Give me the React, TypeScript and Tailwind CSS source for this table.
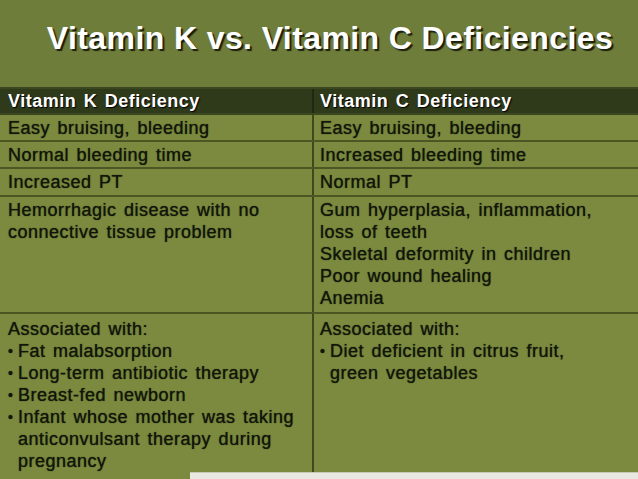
const font = { fontFamily: '"Liberation Sans", Arial, sans-serif' };

function Bullet({ children }: { children: React.ReactNode }) {
  return (
    <div className="flex">
      <span className="w-[10px] shrink-0 text-[14px]">•</span>
      <span>{children}</span>
    </div>
  );
}

function Row({ left, right, className }: { left: React.ReactNode; right: React.ReactNode; className: string }) {
  return (
    <div className={`grid grid-cols-[314px_1fr] border-b-2 border-[#4b5624] ${className}`}>
      <div className="border-r-2 border-[#3e4a1c] pl-[8px] pt-[2px]">{left}</div>
      <div className="pl-[6px] pt-[2px]">{right}</div>
    </div>
  );
}

export default function App() {
  return (
    <div className="w-[638px] h-[479px] overflow-hidden bg-[#6f7d3b] flex flex-col" style={font}>
      <div className="h-[87px] flex items-start justify-center pt-[14px] pl-[22px]">
        <h1 className="text-white font-bold text-[32px] tracking-[0.4px] [text-shadow:2px_2px_1px_#1b1f0e]">
          Vitamin K vs. Vitamin C Deficiencies
        </h1>
      </div>

      <div className="bg-[#7b8a3e] flex-1 flex flex-col text-[18px] leading-[22px] tracking-[0.5px] [word-spacing:2px] text-[#12150a] [text-shadow:0_0_1px_#1c2210]">
        <div className="grid grid-cols-[314px_1fr] h-[28px] bg-[#2e3a1a] border-y-2 border-[#3a4620] text-white font-bold [text-shadow:1px_1px_1px_#000]">
          <div className="border-r-2 border-[#1f2810] pl-[8px] pt-[1px]">Vitamin K Deficiency</div>
          <div className="pl-[6px] pt-[1px]">Vitamin C Deficiency</div>
        </div>
        <Row className="h-[27px]" left="Easy bruising, bleeding" right="Easy bruising, bleeding" />
        <Row className="h-[27px]" left="Normal bleeding time" right="Increased bleeding time" />
        <Row className="h-[28px]" left="Increased PT" right="Normal PT" />
        <Row
          className="h-[117px]"
          left={
            <>
              <div>Hemorrhagic disease with no</div>
              <div>connective tissue problem</div>
            </>
          }
          right={
            <>
              <div>Gum hyperplasia, inflammation,</div>
              <div>loss of teeth</div>
              <div>Skeletal deformity in children</div>
              <div>Poor wound healing</div>
              <div>Anemia</div>
            </>
          }
        />
        <div className="grid grid-cols-[314px_1fr] h-[158px]">
          <div className="border-r-2 border-[#3e4a1c] pl-[8px] pt-[4px]">
            <div>Associated with:</div>
            <Bullet>Fat malabsorption</Bullet>
            <Bullet>Long-term antibiotic therapy</Bullet>
            <Bullet>Breast-fed newborn</Bullet>
            <Bullet>
              Infant whose mother was taking
              <br />
              anticonvulsant therapy during
              <br />
              pregnancy
            </Bullet>
          </div>
          <div className="pl-[6px] pt-[4px]">
            <div>Associated with:</div>
            <Bullet>
              Diet deficient in citrus fruit,
              <br />
              green vegetables
            </Bullet>
          </div>
        </div>
        <div className="flex h-[7px]">
          <div className="w-[190px]" />
          <div className="flex-1 bg-[#e9e9e2] border-t border-[#c9cbb8]" />
        </div>
      </div>
    </div>
  );
}
